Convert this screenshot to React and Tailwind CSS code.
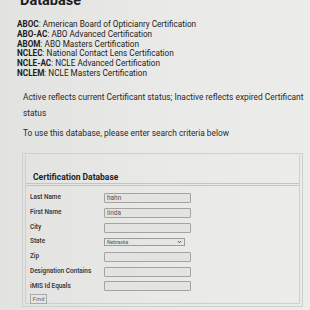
export default function App() {
  const certs = [
    ["ABOC", "American Board of Opticianry Certification"],
    ["ABO-AC", "ABO Advanced Certification"],
    ["ABOM", "ABO Masters Certification"],
    ["NCLEC", "National Contact Lens Certification"],
    ["NCLE-AC", "NCLE Advanced Certification"],
    ["NCLEM", "NCLE Masters Certification"],
  ];
  const rows = [
    ["Last Name", "hahn"],
    ["First Name", "linda"],
    ["City", ""],
    ["State", "select"],
    ["Zip", ""],
    ["Designation Contains", ""],
    ["iMIS Id Equals", ""],
  ];
  return (
    <div className="w-[310px] h-[310px] overflow-hidden flex flex-col bg-gradient-to-r from-[#e2e2e0] via-[#e9e9e7] to-[#ececea] font-['Roboto',sans-serif] text-[#1d1d1d]">
      <div className="pl-[20px] h-[20px] shrink-0 flex flex-col">
        <div className="text-[14.5px] leading-[15px] font-bold mt-[-7px]">Database</div>
      </div>
      <div className="pl-[17px] text-[8.2px] leading-[9.8px] shrink-0">
        {certs.map(([a, b]) => (
          <div key={a} className="whitespace-nowrap">
            <span className="font-bold">{a}</span>: {b}
          </div>
        ))}
      </div>
      <div className="pl-[23px] pt-[10px] text-[8.4px] leading-[16.7px] text-[#2a2a2a] shrink-0">
        <div>Active reflects current Certificant status; Inactive reflects expired Certificant status</div>
        <div className="mt-[3px]">To use this database, please enter search criteria below</div>
      </div>
      <div className="ml-[22px] w-[281px] mt-[11px] border border-[#cfcfcd] h-[154px] shrink-0 px-[2px] pt-[1px] pb-[2px]">
        <div className="border-x border-b border-[#cfcfcd] h-full">
          <div className="h-[31px] flex items-end pl-[7px] pb-[1px] border-b-[3px] border-double border-[#c4c4c2]">
            <span className="text-[8.5px] leading-[10px] font-bold text-[#222]">Certification Database</span>
          </div>
          <div className="pl-[4px] pt-[5px] flex flex-col">
            {rows.map(([label, val]) => (
              <div key={label} className="flex items-center h-[14.7px]">
                <div className="w-[74px] text-[6.4px] font-semibold text-[#3a3a3a] whitespace-nowrap">{label}</div>
                {val === "select" ? (
                  <div className="w-[81px] h-[8px] border border-[#9c9c9a] bg-[#e6e6e4] flex items-center justify-between px-[2px] text-[5px] text-[#555]">
                    <span>Nebraska</span>
                    <svg width="5" height="4" viewBox="0 0 5 4"><path d="M0.8 1 L2.5 2.8 L4.2 1" stroke="#444" strokeWidth="0.9" fill="none" /></svg>
                  </div>
                ) : (
                  <div className="w-[87px] h-[10px] border border-[#a3a3a1] bg-[#e3e3e1] rounded-[1px] flex items-center px-[2px] text-[6.5px] leading-[8px] text-[#555]">
                    {val}
                  </div>
                )}
              </div>
            ))}
            <div className="flex">
              <div className="flex items-center w-[17px] h-[10px] border border-[#a8a8a6] bg-[#e6e6e4] justify-center text-[6.2px] leading-[8px] text-[#666]">Find</div>
            </div>
          </div>
        </div>
      </div>
    </div>
  );
}
